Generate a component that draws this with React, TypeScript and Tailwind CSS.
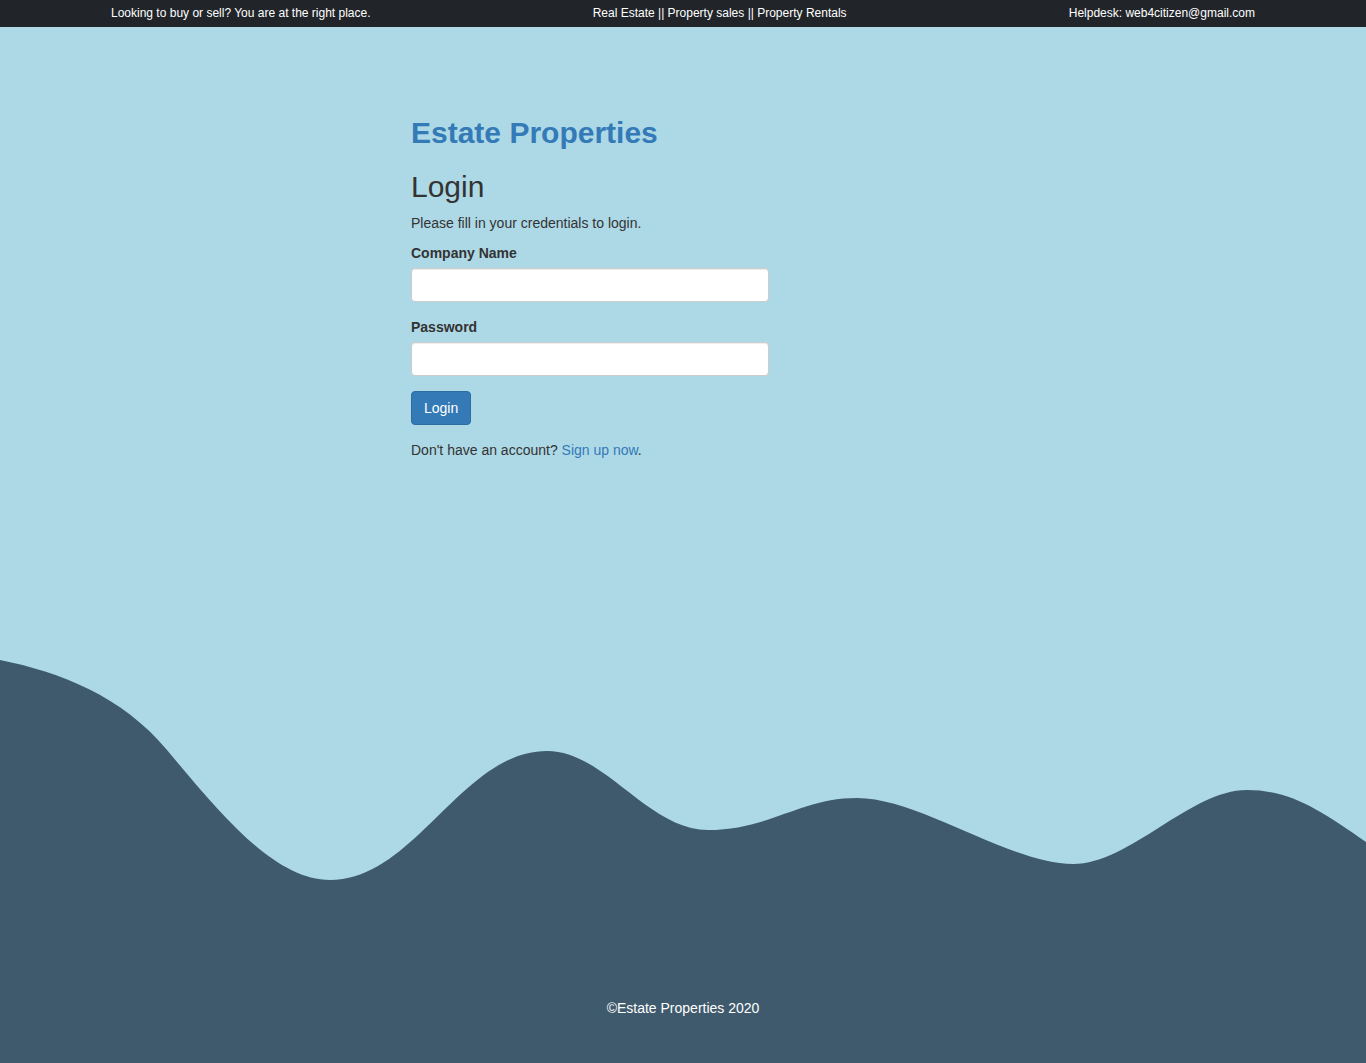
import { useState } from "react";

function Onda() {
  return (
    <svg
      className="block w-full h-[320px] shrink-0"
      viewBox="0 0 1366 320"
      preserveAspectRatio="none"
    >
      <path
        fill="#3e5a6c"
        d="M0,0 C60,12 122,36 167,90 C222,156 275,220 330,220 C415,220 462,91 547,91 C605,91 648,170 708,170 C770,170 800,138 857,138 C920,138 1010,204 1073,204 C1130,204 1190,130 1247,130 C1290,130 1320,150 1366,182 L1366,320 L0,320 Z"
      />
    </svg>
  );
}

export default function App() {
  const [empresa, setEmpresa] = useState("");
  const [senha, setSenha] = useState("");

  return (
    <div className="h-screen flex flex-col bg-[#add8e6] font-['Liberation_Sans',Arial,sans-serif] text-[#333] text-[14px] leading-[20px] overflow-hidden">
      <div className="h-[27px] shrink-0 bg-[#212529] text-white text-[12px] flex items-center justify-between px-[111px] pb-[2px]">
        <span>Looking to buy or sell? You are at the right place.</span>
        <span>Real Estate || Property sales || Property Rentals</span>
        <span>Helpdesk: web4citizen@gmail.com</span>
      </div>

      <div className="flex-1">
        <div className="ml-[411px] w-[358px] pt-[89px]">
          <h2 className="text-[30px] leading-[33px] font-bold text-[#337ab7]">
            Estate Properties
          </h2>
          <h2 className="mt-[21px] mb-[10px] text-[30px] leading-[33px]">Login</h2>
          <p className="mb-[10px]">Please fill in your credentials to login.</p>

          <form onSubmit={(e) => e.preventDefault()}>
            <div className="mb-[15px]">
              <label className="block mb-[5px] font-bold">Company Name</label>
              <input
                type="text"
                value={empresa}
                onChange={(e) => setEmpresa(e.target.value)}
                className="block w-full h-[34px] px-3 bg-white border border-[#ccc] rounded-[4px] shadow-[inset_0_1px_1px_rgba(0,0,0,0.075)] outline-none"
              />
            </div>
            <div className="mb-[15px]">
              <label className="block mb-[5px] font-bold">Password</label>
              <input
                type="password"
                value={senha}
                onChange={(e) => setSenha(e.target.value)}
                className="block w-full h-[34px] px-3 bg-white border border-[#ccc] rounded-[4px] shadow-[inset_0_1px_1px_rgba(0,0,0,0.075)] outline-none"
              />
            </div>
            <div className="mb-[15px]">
              <button
                type="submit"
                className="h-[34px] px-3 bg-[#337ab7] border border-[#2e6da4] rounded-[4px] text-white"
              >
                Login
              </button>
            </div>
            <p>
              Don't have an account?{" "}
              <a href="#" className="text-[#337ab7]">
                Sign up now
              </a>
              .
            </p>
          </form>
        </div>
      </div>

      <Onda />
      <footer className="h-[83px] shrink-0 bg-[#3e5a6c] text-white text-center pt-[18px]">
        ©Estate Properties 2020
      </footer>
    </div>
  );
}
